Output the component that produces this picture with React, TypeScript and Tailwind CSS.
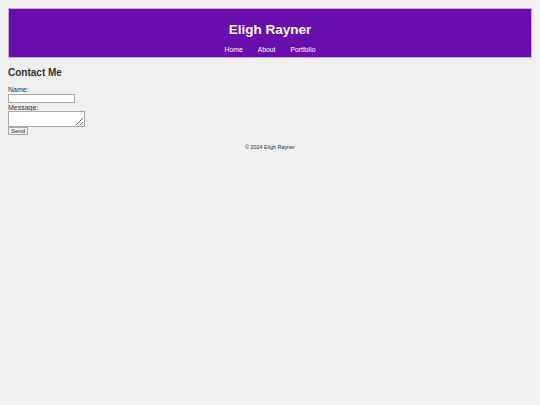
export default function App() {
  return (
    <div className="min-h-[405px] bg-[#f0f0f0] p-2 font-['Liberation_Sans',Arial,sans-serif] text-[#333]">
      <header className="flex h-[50px] flex-col items-center border border-[#c9a3e3] bg-[#6a0dad] pt-[13px] text-white">
        <h1 className="text-[13.5px] font-bold leading-[16px]">Eligh Rayner</h1>
        <nav className="mt-[8px] flex gap-[15px] text-[6.8px] leading-[8px]">
          <a>Home</a>
          <a>About</a>
          <a>Portfolio</a>
        </nav>
      </header>

      <section className="mt-[9px]">
        <h2 className="text-[10px] font-bold leading-[12px]">Contact Me</h2>
        <form className="mt-[7px] flex flex-col items-start text-[7px] leading-[8px]">
          <label>Name:</label>
          <input type="text" className="h-[9px] w-[67px] border border-[#aaa] bg-white" />
          <label className="mt-[1px]">Message:</label>
          <textarea className="-mt-[1px] h-[16px] w-[77px] border border-[#aaa] bg-white" />
          <button type="button" className="h-[8px] w-[20px] border border-[#aaa] bg-[#efefef] text-[6px] leading-[6px]">
            Send
          </button>
        </form>
      </section>

      <footer className="mt-[8px] text-center text-[5.4px] leading-[8px]">&copy; 2024 Eligh Rayner</footer>
    </div>
  );
}
